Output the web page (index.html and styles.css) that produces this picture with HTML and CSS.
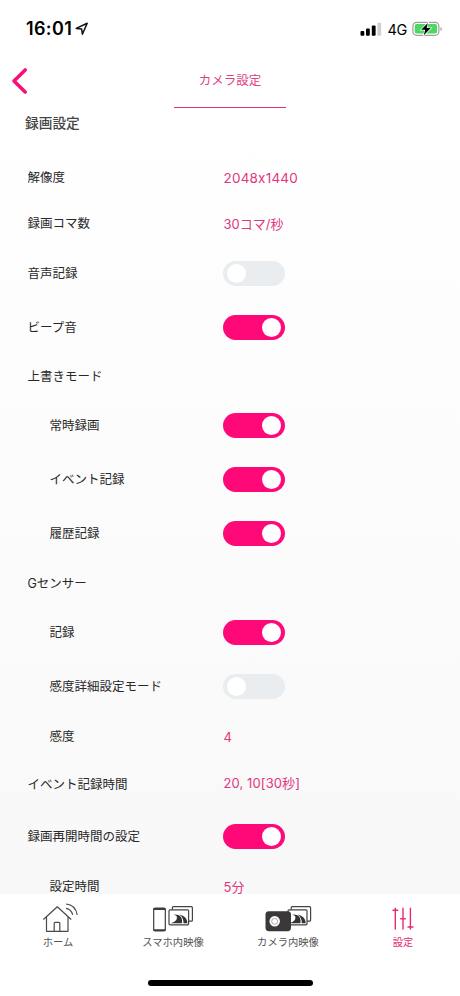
FILE: index.html
```html
<!DOCTYPE html>
<html lang="ja">
<head>
<meta charset="utf-8">
<title>カメラ設定</title>
<link rel="stylesheet" href="styles.css">
</head>
<body>
<div class="screen">
  <header class="status">
    <span class="time">16:01</span>
    <svg class="location" width="14" height="14" viewBox="0 0 14 14"><path d="M1.2 6.4 12.2 1.3 7.4 12.2 6.6 7.1Z" fill="none" stroke="#111" stroke-width="1.5" stroke-linejoin="round"/></svg>
    <svg class="signal" width="22" height="14" viewBox="0 0 22 14"><g fill="#000"><rect x=".5" y="9" width="3.8" height="4.7" rx="1"/><rect x="6" y="6.5" width="3.8" height="7.2" rx="1"/><rect x="11.8" y="3.6" width="3.8" height="10.1" rx="1"/></g><rect x="17.4" y=".8" width="3.8" height="12.9" rx="1" fill="#cfcfcf"/></svg>
    <span class="network">4G</span>
    <svg class="battery" width="31" height="16" viewBox="0 0 31 16"><rect x=".9" y="1.3" width="26" height="13" rx="3.8" fill="#fff" stroke="#a0a0a0" stroke-width="1.2"/><rect x="2.7" y="3" width="22.4" height="9.6" rx="2" fill="#4cd863"/><path d="M28.5 6v4q1.4-.6 1.4-2t-1.4-2z" fill="#a0a0a0"/><path d="M15.8 1.9 9.2 8.8h4l-1.4 5.4 7-7.1h-4.1z" fill="#000" stroke="#fff" stroke-width="1.4" paint-order="stroke"/></svg>
  </header>
  <nav class="topbar">
    <svg class="back" width="18" height="28" viewBox="0 0 18 28"><path d="M14.2 3 3 14 14.2 25" fill="none" stroke="#f90f78" stroke-width="3.6" stroke-linecap="round" stroke-linejoin="round"/></svg>
    <span class="tab-title">カメラ設定</span>
  </nav>
  <main class="settings">
    <h1>録画設定</h1>
    <div class="row short"><span class="label">解像度</span><span class="value resolution">2048x1440</span></div>
    <div class="row short"><span class="label">録画コマ数</span><span class="value">30コマ/秒</span></div>
    <div class="row"><span class="label">音声記録</span><span class="toggle"></span></div>
    <div class="row"><span class="label">ビープ音</span><span class="toggle on"></span></div>
    <div class="row group"><span class="label">上書きモード</span></div>
    <div class="row sub"><span class="label">常時録画</span><span class="toggle on"></span></div>
    <div class="row sub"><span class="label">イベント記録</span><span class="toggle on"></span></div>
    <div class="row sub"><span class="label">履歴記録</span><span class="toggle on"></span></div>
    <div class="row group sensor"><span class="label">Gセンサー</span></div>
    <div class="row sub"><span class="label">記録</span><span class="toggle on"></span></div>
    <div class="row sub"><span class="label">感度詳細設定モード</span><span class="toggle"></span></div>
    <div class="row sub level"><span class="label">感度</span><span class="value">4</span></div>
    <div class="row duration"><span class="label">イベント記録時間</span><span class="value">20, 10[30秒]</span></div>
    <div class="row"><span class="label">録画再開時間の設定</span><span class="toggle on"></span></div>
    <div class="row sub short"><span class="label">設定時間</span><span class="value">5分</span></div>
  </main>
  <footer class="tabs">
    <div class="tab home">
      <svg width="38" height="32" viewBox="0 0 38 32" fill="none" stroke="#4a4a4a" stroke-width="1.2" stroke-linejoin="round"><path d="M3.4 17.5 17.3 4.8 31.2 17.5M6.5 15.2V29.3H28V15.2M14.2 29V21.3q0-1 1-1h3.6q1 0 1 1V29"/><path d="M26 2q9.5.8 11.2 10.8M26 6.4q5.3.8 6.7 6.4"/></svg>
      <span>ホーム</span>
    </div>
    <div class="tab">
      <svg width="42" height="32" viewBox="0 0 42 32"><rect x="1.7" y="6" width="11.6" height="23" rx="1.5" fill="#fff" stroke="#3c3c3c" stroke-width="1.2"/><path d="M1.5 6h12v2h-12zM1.5 27.2h12V29h-12z" fill="#3c3c3c"/><rect x="20.4" y="4.7" width="20" height="14.5" rx="1" fill="#fff" stroke="#444" stroke-width="1.2"/><rect x="17" y="7.8" width="19.6" height="15" rx="1" fill="#fff" stroke="#444" stroke-width="1.2"/><path d="M18.5 21.3q8.3-2.2 6.1-7.3l-2.7-1.5q6.2-.1 7.6 3.4 1 2.4.3 5.4zM31.4 21.3q.5-5.4-4-8.8 7.7 1.7 8.1 8.8z" fill="#333"/></svg>
      <span>スマホ内映像</span>
    </div>
    <div class="tab">
      <svg width="48" height="32" viewBox="0 0 48 32"><rect x="27.2" y="4.7" width="19.4" height="14.5" rx="1" fill="#fff" stroke="#444" stroke-width="1.2"/><rect x="24" y="7.8" width="19" height="15" rx="1" fill="#fff" stroke="#444" stroke-width="1.2"/><path d="M25 21.3q8.3-2.2 6.1-7.3l-2.7-1.5q6.2-.1 7.6 3.4 1 2.4.3 5.4zM37.7 21.3q.5-5.4-4-8.8 7.7 1.7 8.1 8.8z" fill="#333"/><rect x="1.5" y="9.2" width="25.5" height="20" rx="3.4" fill="#3a3838"/><circle cx="10.7" cy="19.3" r="5.2" fill="#fff"/><circle cx="10.7" cy="19.3" r="3" fill="#fff" stroke="#aaa"/></svg>
      <span>カメラ内映像</span>
    </div>
    <div class="tab active">
      <svg width="22" height="32" viewBox="0 0 22 32" fill="none" stroke="#e62b74" stroke-width="1.4" stroke-linecap="round"><path d="M3.3 6.3V27M1 8.3h4.7M11 6.3V27M8.7 16.7h4.6M18.4 6.3V27M16 25h5"/></svg>
      <span>設定</span>
    </div>
  </footer>
  <div class="home-bar"></div>
</div>
</body>
</html>
```
FILE: styles.css
```css
* { box-sizing: border-box; }
body { margin: 0; font-family: Inter, "Noto Sans CJK JP", sans-serif; }
.screen {
  display: flex;
  flex-direction: column;
  width: 460px;
  height: 996px;
  overflow: hidden;
  background: #fff;
}
.status {
  display: flex;
  align-items: center;
  flex: none;
  height: 57px;
  padding: 0 17px 0 26px;
  color: #000;
}
.time { font-size: 18px; font-weight: 600; letter-spacing: .35px; }
.location { margin-left: 3px; }
.signal { margin-left: auto; }
.network { margin: 1px 5px 0 5px; font-size: 14.5px; font-weight: 400; letter-spacing: -.3px; }
.topbar {
  display: grid;
  grid-template-columns: 163px 112px;
  flex: none;
  height: 51px;
  padding-left: 11px;
}
.back { margin-top: 10px; }
.tab-title {
  height: 51px;
  border-bottom: 1px solid #e0307c;
  color: #df3f83;
  font-size: 12.5px;
  line-height: 47px;
  text-align: center;
}
.settings {
  flex: none;
  height: 786px;
  overflow: hidden;
  background: linear-gradient(#fff, #f8f8f8);
}
h1 {
  height: 46px;
  margin: 0;
  padding-left: 25px;
  color: #444;
  font-size: 13.7px;
  font-weight: 500;
  line-height: 30px;
}
.row {
  display: grid;
  grid-template-columns: 196px 1fr;
  align-items: center;
  height: 54px;
  padding-left: 27.5px;
}
.row.sub { grid-template-columns: 174px 1fr; padding-left: 49.5px; }
.row.short { height: 46px; }
.row.group { height: 44px; }
.row.sensor { height: 45.5px; }
.row.level { height: 45px; }
.row.duration { height: 51px; }
.label { padding-top: 1.5px; color: #292929; font-size: 12.5px; line-height: 18px; }
.sub .label { padding-top: 1px; }
.value {
  padding-top: 1px;
  color: #e0377f;
  font-size: 13px;
  line-height: 18px;
}
.resolution { font-size: 13.5px; letter-spacing: .2px; }
.duration .value { padding: 0 0 3px; letter-spacing: .1px; }
.toggle {
  display: flex;
  width: 62px;
  height: 25px;
  margin-left: -.5px;
  padding: 3px 4px;
  border-radius: 13px;
  background: #e9edef;
}
.toggle::before {
  width: 19px;
  height: 19px;
  border-radius: 50%;
  background: #fff;
  content: "";
}
.toggle.on { justify-content: flex-end; background: #ff0878; }
.tabs {
  display: grid;
  grid-template-columns: repeat(4, 115px);
  flex: none;
  height: 86px;
  padding: 8px 0 0 .5px;
}
.tab {
  display: flex;
  align-items: center;
  flex-direction: column;
  color: #555;
  font-size: 10.3px;
  line-height: 15px;
}
.home svg { margin-left: 2px; }
.tab span { margin-top: .5px; }
.tab.active { color: #e62b74; }
.home-bar {
  flex: none;
  width: 165px;
  height: 6px;
  margin-left: 148px;
  border-radius: 3px;
  background: #000;
}
```
